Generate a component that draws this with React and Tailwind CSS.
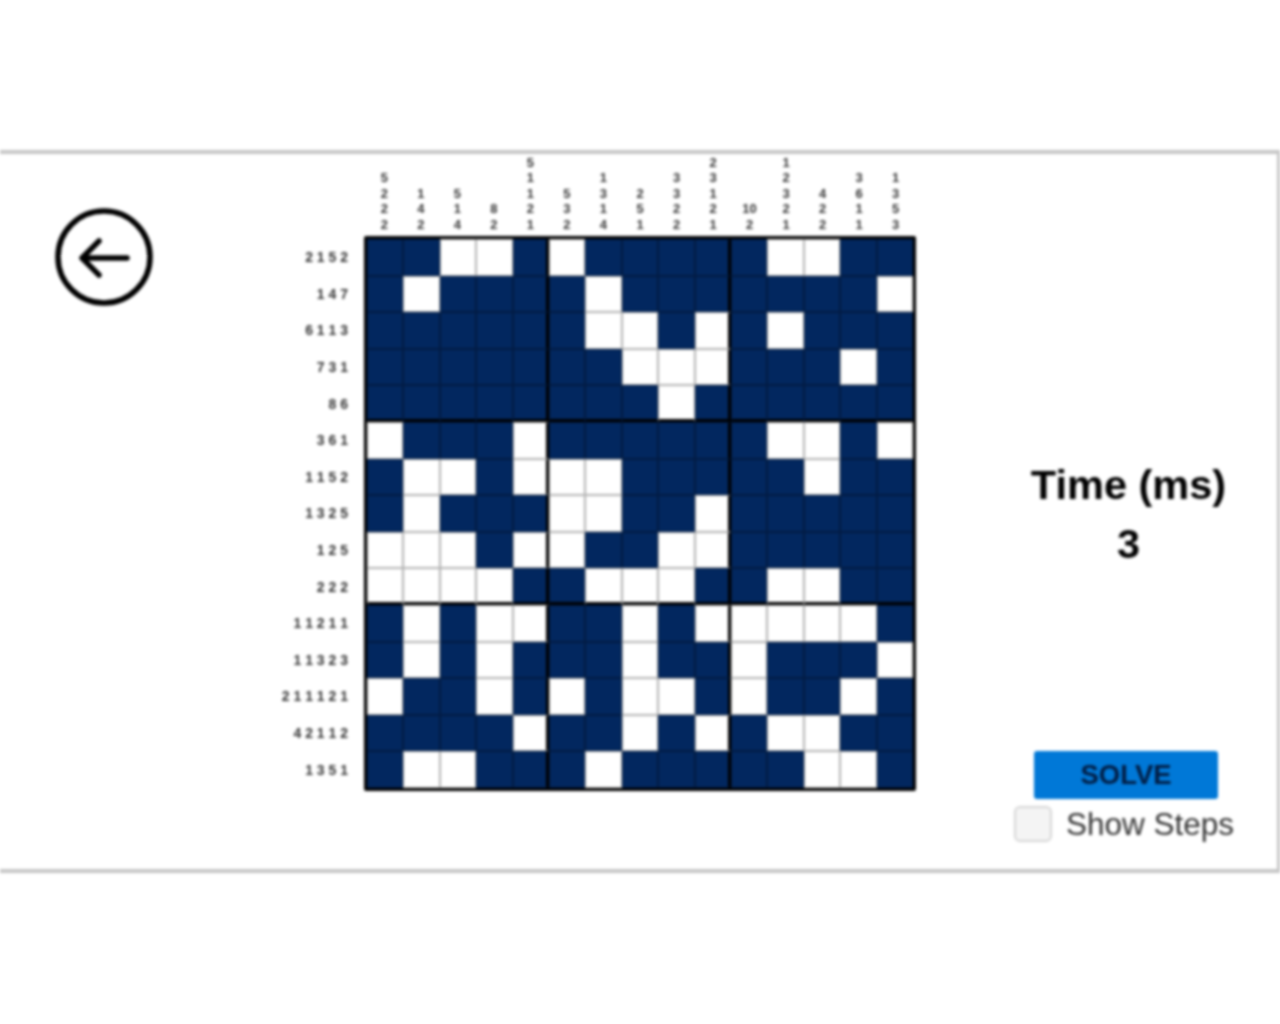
const whites = [
  [2, 3, 5, 11, 12],
  [1, 6, 14],
  [6, 7, 9, 11],
  [7, 8, 9, 13],
  [8],
  [0, 4, 11, 12, 14],
  [1, 2, 4, 5, 6, 12],
  [1, 5, 6, 9],
  [0, 1, 2, 4, 5, 8, 9],
  [0, 1, 2, 3, 6, 7, 8, 11, 12],
  [1, 3, 4, 7, 9, 10, 11, 12, 13],
  [1, 3, 7, 10, 14],
  [0, 3, 5, 7, 8, 10, 13],
  [4, 7, 9, 11, 12],
  [1, 2, 6, 12, 13],
];

const rowClues = ["2 1 5 2", "1 4 7", "6 1 1 3", "7 3 1", "8 6", "3 6 1", "1 1 5 2", "1 3 2 5", "1 2 5", "2 2 2", "1 1 2 1 1", "1 1 3 2 3", "2 1 1 1 2 1", "4 2 1 1 2", "1 3 5 1"];

const indices = Array.from({ length: 15 }, (_, i) => i);

function columnClue(c) {
  const runs = [];
  let run = 0;
  indices.forEach((r) => {
    if (whites[r].includes(c)) {
      if (run) runs.push(run);
      run = 0;
    } else {
      run += 1;
    }
  });
  if (run) runs.push(run);
  return runs;
}

function Cell({ r, c }) {
  const white = whites[r].includes(c);
  const right = c === 4 || c === 9;
  const bottom = r === 4 || r === 9;
  return (
    <div
      className={`border border-black/30 ${white ? "bg-white" : "bg-[#02275f]"} ${right ? "border-r-[3px] border-r-black" : ""} ${bottom ? "border-b-[3px] border-b-black" : ""}`}
    />
  );
}

export default function App() {
  return (
    <div className="h-[1024px] w-[1280px] overflow-hidden bg-white pt-[150px] font-['Liberation_Sans',sans-serif] blur-[1.4px]">
      <div className="flex h-[723px] border-y-[4px] border-r-[3px] border-[#c6c6c6]">
        <div className="w-[280px] shrink-0 pl-[55px] pt-[54px]">
          <svg width="98" height="98" viewBox="0 0 98 98" fill="none" stroke="#000000" strokeWidth="5.5" strokeLinecap="round" strokeLinejoin="round">
            <circle cx="49" cy="49" r="46" />
            <path d="M28 50H72" />
            <path d="M44 33 L27 50 L44 67" />
          </svg>
        </div>

        <div className="w-[636px] shrink-0">
          <div className="ml-[84px] grid h-[82px] w-[552px] grid-cols-15 items-end px-[2px] pb-[4px] text-center text-[13px] font-bold leading-[15.5px] text-[#333333]">
            {indices.map((c) => (
              <div key={c} className="flex flex-col items-center">
                {columnClue(c).map((n, i) => (
                  <span key={i}>{n}</span>
                ))}
              </div>
            ))}
          </div>
          <div className="flex">
            <div className="grid h-[555px] w-[68px] grid-rows-15 py-[3px] text-right text-[14px] font-bold leading-none text-[#333333]">
              {rowClues.map((t) => (
                <div key={t} className="flex items-center justify-end whitespace-nowrap">
                  {t}
                </div>
              ))}
            </div>
            <div className="ml-[16px] grid h-[555px] w-[552px] grid-cols-15 grid-rows-15 rounded-[2px] border-[3px] border-black">
              {indices.map((r) => indices.map((c) => <Cell key={`${r}-${c}`} r={r} c={c} />))}
            </div>
          </div>
        </div>

        <div className="flex flex-1 flex-col pl-[98px] pt-[301px]">
          <div className="w-[229px] text-center text-[41.5px] font-bold leading-[59px] text-black">
            <div>Time (ms)</div>
            <div>3</div>
          </div>
          <button className="ml-[20px] mt-[178px] h-[48px] w-[184px] rounded-[3px] bg-[#0078d7] text-[27.5px] font-bold text-[#021c42]">
            SOLVE
          </button>
          <label className="mt-[7px] flex items-center gap-[14px] text-[31.5px] leading-[36px] text-[#333333]">
            <span className="h-[36px] w-[38px] rounded-[6px] border-2 border-[#d5d5d5] bg-[#f4f4f4]" />
            Show Steps
          </label>
        </div>
      </div>
    </div>
  );
}
